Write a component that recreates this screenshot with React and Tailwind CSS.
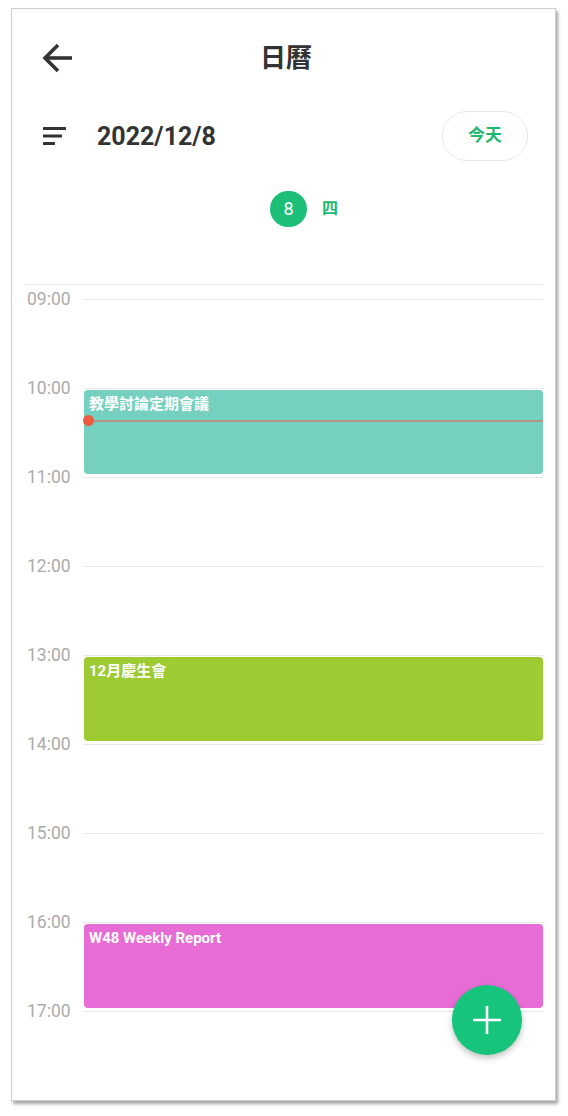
import React from 'react';

const HOURS = ['09:00', '10:00', '11:00', '12:00', '13:00', '14:00', '15:00', '16:00', '17:00'];

const EVENTS = [
  { id: 1, title: '教學討論定期會議', top: 91, color: 'bg-[#76d0bf]' },
  { id: 2, title: '12月慶生會', top: 358, color: 'bg-[#9dcb31]' },
  { id: 3, title: 'W48 Weekly Report', top: 625, color: 'bg-[#e86cd6]' },
];

const BackArrow = () => (
  <svg width="32" height="30" viewBox="0 0 32 30" fill="none">
    <path d="M3 15H30" stroke="#333" strokeWidth="3.6" />
    <path d="M16 2L3 15L16 28" stroke="#333" strokeWidth="3.6" />
  </svg>
);

const SortIcon = () => (
  <svg width="24" height="18" viewBox="0 0 24 18" fill="#333">
    <rect x="0" y="0" width="23" height="3" rx="0.5" />
    <rect x="0" y="7.5" width="19" height="3" rx="0.5" />
    <rect x="0" y="15" width="12" height="3" rx="0.5" />
  </svg>
);

const App = () => {
  return (
    <div className="w-[568px] h-[1116px] bg-white pt-[8px] pl-[11px] font-['Roboto','Noto_Sans_CJK_TC',sans-serif]">
      <div className="relative w-[545px] h-[1093px] bg-white border border-[#cfcfcf] shadow-[2px_3px_3px_rgba(0,0,0,0.35)] overflow-hidden flex flex-col">
        {/* top bar */}
        <div className="h-[98px] shrink-0 flex items-center pl-[30px]">
          <BackArrow />
          <h1 className="ml-[186px] text-[26px] font-bold text-[#333] leading-none">日曆</h1>
        </div>

        {/* date row */}
        <div className="h-[58px] shrink-0 flex items-center pl-[31px] pr-[27px]">
          <SortIcon />
          <span className="ml-[30px] text-[25px] font-bold text-[#333] leading-none">2022/12/8</span>
          <button className="ml-auto w-[86px] h-[50px] rounded-full border-[1.5px] border-[#e8e8e8] text-[17px] font-bold text-[#1eb872]">
            今天
          </button>
        </div>

        {/* day selector */}
        <div className="h-[119px] shrink-0 pl-[258px] pt-[26px]">
          <div className="flex items-center gap-[15px]">
            <div className="w-[37px] h-[36px] rounded-full bg-[#1dbf78] flex items-center justify-center text-white text-[18px] leading-none">
              8
            </div>
            <span className="text-[16px] font-bold text-[#1eb872] leading-none">四</span>
          </div>
        </div>

        <div className="h-px shrink-0 ml-[13px] mr-[12px] bg-[#ebebeb]" />

        {/* timeline */}
        <div className="flex pt-[14px]">
          <div className="w-[71px] shrink-0 pl-[15px]">
            {HOURS.map((h) => (
              <div key={h} className="h-[89px]">
                <div className="relative -top-[11px] leading-[22px] text-[17.5px] text-[#ababab]">{h}</div>
              </div>
            ))}
          </div>
          <div className="relative flex-1 mr-[12px]">
            {HOURS.map((h) => (
              <div key={h} className="h-[89px] border-t border-[#e9e9e9]" />
            ))}
            {EVENTS.map((ev) => (
              <div
                key={ev.id}
                className={`absolute left-[1px] right-0 h-[84px] rounded-[4px] ${ev.color} pl-[5px] pt-[5px] text-[15px] font-bold text-white leading-[18px]`}
                style={{ top: ev.top }}
              >
                {ev.title}
              </div>
            ))}
            {/* now indicator */}
            <div className="absolute left-[5px] right-0 top-[121px] h-[2px] bg-[#ee5a3f]/50" />
            <div className="absolute left-0 top-[116px] w-[11px] h-[11px] rounded-full bg-[#ef5b3f]" />
          </div>
        </div>

        <button className="absolute right-[33px] bottom-[45px] w-[70px] h-[70px] rounded-full bg-[#16c47c] shadow-[0_3px_6px_rgba(0,0,0,0.25)] flex items-center justify-center">
          <svg width="28" height="28" viewBox="0 0 28 28">
            <path d="M14 0V28M0 14H28" stroke="white" strokeWidth="2.6" />
          </svg>
        </button>
      </div>
    </div>
  );
};

export default App;
